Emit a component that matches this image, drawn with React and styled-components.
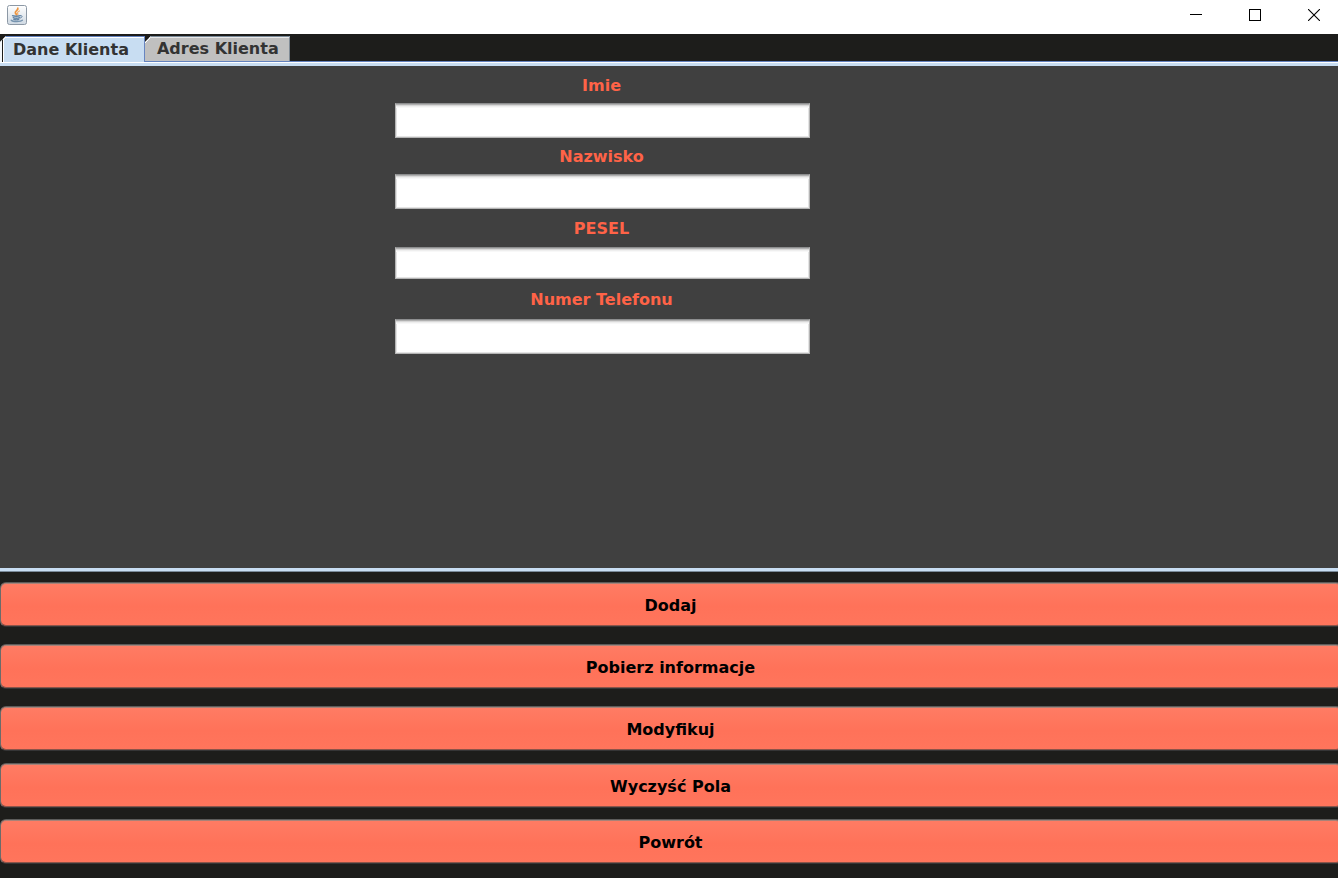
import React, { useState } from "react";
import styled, { createGlobalStyle } from "styled-components";

const GlobalStyle = createGlobalStyle`
  * { box-sizing: border-box; }
  html, body, #root { height: 100%; }
  body {
    margin: 0;
    background: #1d1d1b;
    font: 700 16px/24px "DejaVu Sans", Verdana, sans-serif;
    overflow-x: hidden;
  }
  button, input { font: inherit; }
`;

const Window = styled.div`
  display: flex;
  flex-direction: column;
  min-height: 100%;
  overflow: hidden;
  background: #1d1d1b;
`;

const TitleBar = styled.header`
  display: flex;
  justify-content: space-between;
  height: 34px;
  padding-left: 7px;
  background: #fff;
`;

const AppIcon = styled.svg`
  width: 20px;
  height: 20px;
  margin-top: 5px;
`;

const WindowControls = styled.div`
  display: flex;
  margin-right: -5px;
`;

const WindowButton = styled.button`
  display: flex;
  align-items: center;
  justify-content: center;
  width: 59px;
  height: 30px;
  padding: 0;
  border: 0;
  background: none;
`;

const TabStrip = styled.div`
  display: flex;
  height: 27px;
  padding-top: 2px;
`;

const Tab = styled.button`
  height: ${(p) => (p.$active ? 26 : 25)}px;
  padding: ${(p) => (p.$active ? "1px 16px 0 13px" : "1px 11px 0 12px")};
  border: 0;
  color: #333;
  line-height: 24px;
  background: ${(p) =>
    p.$active
      ? "linear-gradient(135deg, #fff 0 5px, #c8ddf2 5px)"
      : "linear-gradient(135deg, #fff 0 5px, #c0c0c0 5px)"};
  box-shadow: ${(p) =>
    p.$active
      ? "inset -1px 0 #6382bf, inset 0 1px #6382bf, inset 0 2px #fff, inset 2px 0 #f4f8fc, inset 3px 0 #1d1d1b, inset 4px 0 #fff"
      : "inset -1px 1px #7a8a99, inset 0 2px #e8e8e8"};
  clip-path: polygon(6px 0, 100% 0, 100% 100%, 0 100%, 0 6px);
  position: relative;
  z-index: 1;
`;

const TabBody = styled.main`
  display: grid;
  grid-template-columns: 395fr 415fr 528fr;
  height: 508px;
  border-top: 3px solid #c8ddf2;
  border-bottom: 3px solid #c8ddf2;
  box-shadow: 0 1px #7a8a99;
  background: #404040;
`;

const TabEdge = styled.div`
  height: 2px;
  border-top: 1px solid #6382bf;
  background: #fff;
`;

const Fields = styled.form`
  grid-column: 2;
  display: flex;
  flex-direction: column;
`;

const Label = styled.label`
  display: flex;
  align-items: center;
  justify-content: center;
  height: ${(p) => p.$height}px;
  padding: 2px 2px 0 0;
  color: #ff6347;
`;

const TextField = styled.input`
  width: 100%;
  height: ${(p) => (p.$short ? 32 : 35)}px;
  padding: 0 8px;
  border: 1px solid #b4b4b4;
  border-top-color: #8d8e8f;
  background: #fff;
  box-shadow: inset 0 1px #b0b0b0, inset 0 2px #d8d8d8, inset 0 3px #eee,
    inset 0 4px #f8f8f8, inset 1px -1px #e4e4e4, inset -1px 0 #e4e4e4;
  outline: 0;
`;

const Actions = styled.div`
  display: flex;
  flex-direction: column;
  padding: 11px 0 14px;
`;

const ActionGroup = styled.div`
  display: flex;
  flex-direction: column;
  gap: ${(p) => p.$gap}px;
  margin-bottom: ${(p) => p.$after || 0}px;
`;

const ActionButton = styled.button`
  width: calc(100% + 4px);
  height: 45px;
  padding: 2px 1px 0 0;
  border: 1px solid #6b6b6a;
  border-top-color: #5c5c5b;
  border-bottom-color: #353536;
  border-radius: 6px;
  color: #000;
  background: linear-gradient(#ff7c64, #ff7259 55%, #ff755c);
  box-shadow: inset 0 1px #a98278, inset 0 -1px #8c5449;
`;

const fields = [
  { id: "imie", label: "Imie", height: 37 },
  { id: "nazwisko", label: "Nazwisko", height: 36 },
  { id: "pesel", label: "PESEL", height: 38, short: true },
  { id: "telefon", label: "Numer Telefonu", height: 40 },
];

function JavaIcon() {
  return (
    <AppIcon viewBox="0 0 20 20" aria-hidden="true">
      <defs>
        <linearGradient id="tile" x1="0" y1="0" x2="0" y2="1">
          <stop offset="0" stopColor="#fff" />
          <stop offset="1" stopColor="#cfd9e3" />
        </linearGradient>
      </defs>
      <rect x=".5" y=".5" width="19" height="19" rx="2" fill="url(#tile)" stroke="#8c98a5" />
      <g fill="none" strokeLinecap="round">
        <path d="M10.8 3.2c1 2-3.6 3-2.3 5 .4.7 1 1 1.1 1.7" stroke="#ee943d" strokeWidth="1.8" />
        <path d="M12.4 6c-2.5 1-2 1.8-1.5 3.5" stroke="#f3ae6c" strokeWidth="1.3" />
        <path d="M5.5 10.7c1.5.7 6 .7 7.7 0M6.2 12.7c1.7.6 4.7.6 6.3 0M6.8 14.3c1.5.5 4 .5 5 0" stroke="#6384a4" strokeWidth="1.3" />
        <path d="M13.4 10.6c2.5-.4 2.3 2-.3 2.5" stroke="#6384a4" />
        <path d="M4.2 15.2c1.7 1.8 9.6 1.7 11.2.1" stroke="#7794af" strokeWidth="1.3" />
      </g>
    </AppIcon>
  );
}

export default function App() {
  const [tab, setTab] = useState(0);
  return (
    <Window>
      <GlobalStyle />
      <TitleBar>
        <JavaIcon />
        <WindowControls>
          <WindowButton aria-label="Minimalizuj">
            <svg width="12" height="12" shapeRendering="crispEdges"><path d="M0 5.5h12" stroke="#000" /></svg>
          </WindowButton>
          <WindowButton aria-label="Maksymalizuj">
            <svg width="12" height="12" shapeRendering="crispEdges"><path d="M.5 .5h11v11h-11z" fill="none" stroke="#000" /></svg>
          </WindowButton>
          <WindowButton aria-label="Zamknij">
            <svg width="12" height="12"><path d="M0 0l12 12M12 0L0 12" stroke="#000" strokeWidth="1.1" /></svg>
          </WindowButton>
        </WindowControls>
      </TitleBar>
      <TabStrip role="tablist">
        {["Dane Klienta", "Adres Klienta"].map((name, i) => (
          <Tab key={name} role="tab" aria-selected={tab === i} $active={tab === i} onClick={() => setTab(i)}>
            {name}
          </Tab>
        ))}
      </TabStrip>
      <TabEdge />
      <TabBody>
        <Fields>
          {fields.map((f) => (
            <React.Fragment key={f.id}>
              <Label htmlFor={f.id} $height={f.height}>{f.label}</Label>
              <TextField id={f.id} type="text" $short={f.short} />
            </React.Fragment>
          ))}
        </Fields>
      </TabBody>
      <Actions>
        <ActionGroup $gap={17} $after={12}>
          <ActionButton>Dodaj</ActionButton>
          <ActionButton>Pobierz informacje</ActionButton>
          <ActionButton>Modyfikuj</ActionButton>
        </ActionGroup>
        <ActionGroup $gap={11}>
          <ActionButton>Wyczyść Pola</ActionButton>
          <ActionButton>Powrót</ActionButton>
        </ActionGroup>
      </Actions>
    </Window>
  );
}
